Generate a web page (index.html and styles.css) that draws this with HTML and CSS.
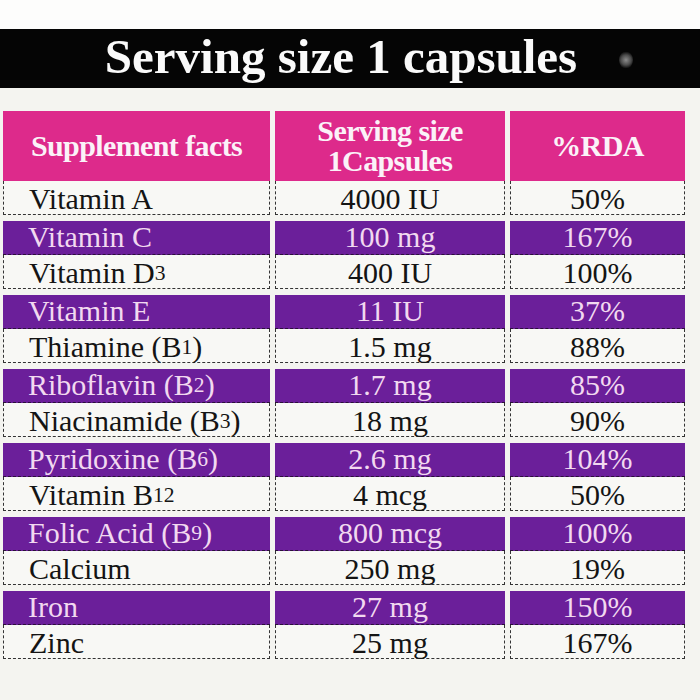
FILE: index.html
```html
<!DOCTYPE html>
<html>
<head>
<meta charset="utf-8">
<link rel="stylesheet" href="styles.css">
</head>
<body>
<div class="top"></div>
<div class="band">
  <h1 class="title">Serving size 1 capsules</h1>
  <span class="spot"></span>
</div>
<div class="table">
  <div class="row head">
    <div class="cell">Supplement facts</div>
    <div class="cell">Serving size<br>1Capsules</div>
    <div class="cell">%RDA</div>
  </div>
  <div class="row w">
    <div class="cell name">Vitamin A</div>
    <div class="cell">4000 IU</div>
    <div class="cell">50%</div>
  </div>

  <div class="row p">
    <div class="cell name">Vitamin C</div>
    <div class="cell">100 mg</div>
    <div class="cell">167%</div>
  </div>
  <div class="row w">
    <div class="cell name">Vitamin D<span class="s">3</span></div>
    <div class="cell">400 IU</div>
    <div class="cell">100%</div>
  </div>

  <div class="row p">
    <div class="cell name">Vitamin E</div>
    <div class="cell">11 IU</div>
    <div class="cell">37%</div>
  </div>
  <div class="row w">
    <div class="cell name">Thiamine (B<span class="s">1</span>)</div>
    <div class="cell">1.5 mg</div>
    <div class="cell">88%</div>
  </div>

  <div class="row p">
    <div class="cell name">Riboflavin (B<span class="s">2</span>)</div>
    <div class="cell">1.7 mg</div>
    <div class="cell">85%</div>
  </div>
  <div class="row w">
    <div class="cell name">Niacinamide (B<span class="s">3</span>)</div>
    <div class="cell">18 mg</div>
    <div class="cell">90%</div>
  </div>

  <div class="row p">
    <div class="cell name">Pyridoxine (B<span class="s">6</span>)</div>
    <div class="cell">2.6 mg</div>
    <div class="cell">104%</div>
  </div>
  <div class="row w">
    <div class="cell name">Vitamin B<span class="s">12</span></div>
    <div class="cell">4 mcg</div>
    <div class="cell">50%</div>
  </div>

  <div class="row p">
    <div class="cell name">Folic Acid (B<span class="s">9</span>)</div>
    <div class="cell">800 mcg</div>
    <div class="cell">100%</div>
  </div>
  <div class="row w">
    <div class="cell name">Calcium</div>
    <div class="cell">250 mg</div>
    <div class="cell">19%</div>
  </div>

  <div class="row p">
    <div class="cell name">Iron</div>
    <div class="cell">27 mg</div>
    <div class="cell">150%</div>
  </div>
  <div class="row w">
    <div class="cell name">Zinc</div>
    <div class="cell">25 mg</div>
    <div class="cell">167%</div>
  </div>
</div>
</body>
</html>
```

FILE: styles.css
```css
* { box-sizing: border-box; }

html, body {
  margin: 0;
  padding: 0;
}

body {
  width: 700px;
  height: 700px;
  overflow: hidden;
  background: #f4f4f0;
  font-family: "Liberation Serif", "Times New Roman", serif;
  color: #141414;
}

.top {
  height: 29px;
  background: #fdfdfc;
}

.band {
  position: relative;
  height: 59px;
  background: #050505;
  display: flex;
  align-items: center;
  justify-content: center;
  padding-right: 18px;
}

.title {
  margin: 0;
  font-size: 49px;
  font-weight: bold;
  color: #fafafa;
  line-height: 1;
  padding-bottom: 4px;
}

.spot {
  position: absolute;
  left: 619px;
  top: 22px;
  width: 14px;
  height: 18px;
  border-radius: 50%;
  background: radial-gradient(circle, #8c8c8c 0%, #4a4a4a 45%, rgba(5,5,5,0) 75%);
}

.table {
  display: flex;
  flex-direction: column;
  padding-top: 23px;
  padding-left: 3px;
}

.row {
  display: grid;
  grid-template-columns: 267px 230px 175px;
  column-gap: 5px;
}

.cell {
  display: flex;
  align-items: center;
  justify-content: center;
  font-size: 30px;
  line-height: 1;
  white-space: nowrap;
}

.cell.name {
  justify-content: flex-start;
  padding-left: 25px;
}

.head .cell {
  height: 70px;
  background: #dd2a8b;
  color: #fbf2f8;
  font-weight: bold;
  font-size: 30px;
  letter-spacing: -0.6px;
  line-height: 30px;
  text-align: center;
}

.w .cell {
  height: 34px;
  background: #f8f8f5;
  border: 1.5px dashed #333;
  border-top: none;
  padding-top: 2px;
}

.p {
  margin-top: 6px;
}

.p .cell {
  height: 34px;
  background: #6b1f9a;
  color: #f2d9f0;
  border-bottom: 1.5px dashed #2a1238;
  padding-bottom: 2px;
}

.s {
  font-size: 0.72em;
  position: relative;
  top: 1px;
}
```
